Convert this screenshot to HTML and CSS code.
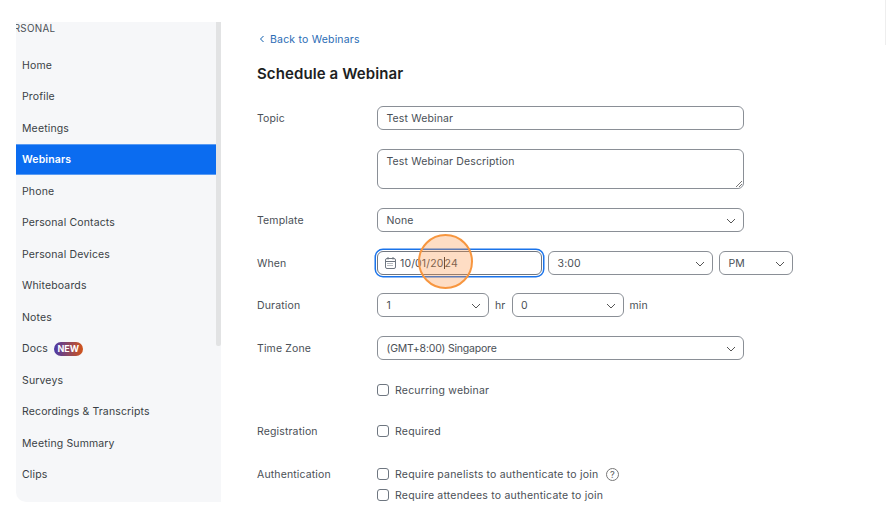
FILE: index.html
```html
<!DOCTYPE html>
<html lang="en">
<head>
<meta charset="utf-8">
<title>Schedule a Webinar</title>
<link rel="stylesheet" href="styles.css">
</head>
<body>
<div class="page">
  <aside class="sidebar">
    <nav class="nav">
      <div class="nav-title">PERSONAL</div>
      <a class="nav-item">Home</a>
      <a class="nav-item">Profile</a>
      <a class="nav-item">Meetings</a>
      <a class="nav-item active">Webinars</a>
      <a class="nav-item">Phone</a>
      <a class="nav-item">Personal Contacts</a>
      <a class="nav-item">Personal Devices</a>
      <a class="nav-item">Whiteboards</a>
      <a class="nav-item">Notes</a>
      <a class="nav-item">Docs <span class="badge">NEW</span></a>
      <a class="nav-item">Surveys</a>
      <a class="nav-item">Recordings &amp; Transcripts</a>
      <a class="nav-item">Meeting Summary</a>
      <a class="nav-item">Clips</a>
    </nav>
    <div class="track"><div class="thumb"></div></div>
  </aside>
  <main class="main">
    <a class="back"><svg class="back-icon" width="6" height="8" viewBox="0 0 6 8"><path d="M4.5 1 1.5 4l3 3" fill="none" stroke="#0b5cad" stroke-width="1"/></svg>Back to Webinars</a>
    <h1 class="title">Schedule a Webinar</h1>

    <div class="row r-topic">
      <div class="label">Topic</div>
      <div class="field wide">Test Webinar</div>
    </div>
    <div class="row r-desc">
      <div class="label"></div>
      <div class="field wide area">Test Webinar Description
        <svg class="grip" width="8" height="8" viewBox="0 0 8 8"><path d="M7 1 1 7M7 4 4 7" stroke="#777" stroke-width="1" fill="none"/></svg>
      </div>
    </div>
    <div class="row r-std">
      <div class="label">Template</div>
      <div class="field wide select">None<svg class="chev" width="10" height="6" viewBox="0 0 10 6"><path d="M1 1l4 4 4-4" fill="none" stroke="#555" stroke-width="1"/></svg></div>
    </div>
    <div class="row r-std">
      <div class="label">When</div>
      <div class="when">
        <div class="field date">
          <svg class="cal" width="11" height="12" viewBox="0 0 11 12"><rect x=".5" y="1.5" width="10" height="10" rx="1.5" fill="none" stroke="#6e7680"/><path d="M.5 4.5h10M3 0v2.5M8 0v2.5" stroke="#6e7680" fill="none"/><path d="M2.5 6.5h6M2.5 8.5h6" stroke="#6e7680" stroke-dasharray="1 1" fill="none"/></svg>
          <span>10/01/20<span class="caret"></span>24</span>
        </div>
        <div class="field select time">3:00<svg class="chev" width="10" height="6" viewBox="0 0 10 6"><path d="M1 1l4 4 4-4" fill="none" stroke="#555" stroke-width="1"/></svg></div>
        <div class="field select ampm">PM<svg class="chev" width="10" height="6" viewBox="0 0 10 6"><path d="M1 1l4 4 4-4" fill="none" stroke="#555" stroke-width="1"/></svg></div>
      </div>
    </div>
    <div class="row r-dur">
      <div class="label">Duration</div>
      <div class="dur">
        <div class="field select small">1<svg class="chev" width="10" height="6" viewBox="0 0 10 6"><path d="M1 1l4 4 4-4" fill="none" stroke="#555" stroke-width="1"/></svg></div>
        <span class="unit hr">hr</span>
        <div class="field select small">0<svg class="chev" width="10" height="6" viewBox="0 0 10 6"><path d="M1 1l4 4 4-4" fill="none" stroke="#555" stroke-width="1"/></svg></div>
        <span class="unit">min</span>
      </div>
    </div>
    <div class="row r-std">
      <div class="label">Time Zone</div>
      <div class="field wide select"><span class="tz">(GMT+8:00) Singapore</span><svg class="chev" width="10" height="6" viewBox="0 0 10 6"><path d="M1 1l4 4 4-4" fill="none" stroke="#555" stroke-width="1"/></svg></div>
    </div>
    <div class="row r-rec">
      <div class="label"></div>
      <label class="check"><span class="box"></span>Recurring webinar</label>
    </div>
    <div class="row r-reg">
      <div class="label short">Registration</div>
      <label class="check"><span class="box"></span>Required</label>
    </div>
    <div class="row r-auth">
      <div class="label short">Authentication</div>
      <div class="checks">
        <label class="check"><span class="box"></span>Require panelists to authenticate to join
          <svg class="help" width="13" height="13" viewBox="0 0 13 13"><circle cx="6.5" cy="6.5" r="6" fill="none" stroke="#777"/><text x="6.5" y="9.5" text-anchor="middle" class="help-text">?</text></svg>
        </label>
        <label class="check"><span class="box"></span>Require attendees to authenticate to join</label>
      </div>
    </div>
  </main>
</div>
<div class="spot"></div>
<div class="edge"></div>
</body>
</html>
```
FILE: styles.css
```css
* { box-sizing: border-box; }
html, body { margin: 0; height: 100%; overflow: hidden; background: #fff; }
body { font-family: Inter, "Liberation Sans", sans-serif; font-size: 10.5px; letter-spacing: 0.14px; color: #4a4f56; }
.page { display: flex; height: 516px; padding: 22px 0 14px 16px; }

.sidebar { position: relative; width: 205px; height: 480px; flex: none; background: #f6f7f9; border-bottom-left-radius: 10px; overflow: hidden; }
.nav { width: 200px; }
.nav-title { height: 14px; line-height: 13px; font-size: 9.8px; letter-spacing: 0.3px; margin-left: -15px; white-space: nowrap; color: #4a4f56; font-weight: 400; }
.nav-item { display: flex; align-items: center; gap: 6px; height: 31.5px; padding-left: 6px; font-size: 10.5px; font-weight: 400; color: #3a3f45; }
.nav-title + .nav-item { margin-top: 13.5px; }
.nav-item.active { height: 30.5px; margin-bottom: 1px; background: #0b6cf0; color: #fff; font-weight: 600; border-top: 1px solid #5a9bf2; border-bottom: 1px solid #5a9bf2; }
.badge { display: inline-block; height: 14px; line-height: 14px; padding: 0 3.5px; border-radius: 7px; font-size: 9px; font-weight: 700; letter-spacing: 0; color: #fff; background: linear-gradient(90deg, #4a3aa8, #d2541a); }
.track { position: absolute; top: 0; right: 0; bottom: 0; width: 5px; }
.thumb { height: 324px; background: #e2e3e4; border-radius: 0 0 2px 2px; }

.main { flex: 1; padding: 10px 0 0 36px; }
.back { display: flex; align-items: center; gap: 5px; height: 14px; color: #2b6cb5; font-size: 10.5px; font-weight: 400; letter-spacing: 0.2px; padding-left: 2px; }
.title { margin: 18px 0 0; height: 20px; line-height: 20px; font-size: 15px; letter-spacing: 0.1px; font-weight: 600; color: #1d1f23; }

.row { display: flex; }
.label { width: 120px; flex: none; height: 24px; line-height: 25px; font-weight: 400; color: #4a4f56; }
.label.short { height: 12px; line-height: 14px; }
.r-topic { margin-top: 22px; }
.r-desc { margin-top: 19px; }
.r-std { margin-top: 19px; }
.r-dur { margin-top: 18px; }
.r-rec { margin-top: 24px; }
.r-rec .label { height: 12px; }
.r-reg { margin-top: 29px; }
.r-auth { margin-top: 31px; }

.field { position: relative; height: 24px; line-height: 23px; padding: 0 8.5px; background: #fff; border: 1px solid #8a8f96; border-radius: 6px; color: #4a4f56; white-space: nowrap; flex: none; }
.wide { width: 367px; }
.area { height: 40px; }
.grip { position: absolute; right: 0; bottom: 0; }
.chev { position: absolute; right: 7px; top: 9px; }
.tz { letter-spacing: -0.2px; }
.when { display: flex; gap: 6px; }
.date { width: 165px; display: flex; align-items: center; gap: 4px; padding-left: 7px; border: 1px solid #6f7680; box-shadow: 0 0 0 1px #fff, 0 0 0 2.5px #1a73ea; }
.caret { display: inline-block; width: 1px; height: 12px; background: #333; vertical-align: -2px; }
.time { width: 165px; }
.ampm { width: 74px; }
.dur { display: flex; align-items: center; }
.small { width: 112px; }
.unit { margin: 0 6px; font-weight: 400; }
.unit.hr { margin-right: 5.5px; min-width: 11px; }

.check { display: flex; align-items: center; height: 12px; font-weight: 400; letter-spacing: 0.2px; white-space: nowrap; }
.box { width: 12px; height: 12px; margin-right: 6px; background: #fff; border: 1px solid #6e7680; border-radius: 3px; flex: none; }
.checks { display: flex; flex-direction: column; gap: 9px; }
.help { margin-left: 7.5px; }
.help-text { font: 500 9px Inter, sans-serif; fill: #666; }

.spot { position: absolute; left: 418px; top: 234px; width: 55px; height: 55px; border-radius: 50%; background: rgba(253, 142, 60, 0.3); border: 2px solid #f7963f; }
.edge { position: absolute; right: 0; top: 0; width: 1px; height: 45px; background: #eeeeee; }
```
